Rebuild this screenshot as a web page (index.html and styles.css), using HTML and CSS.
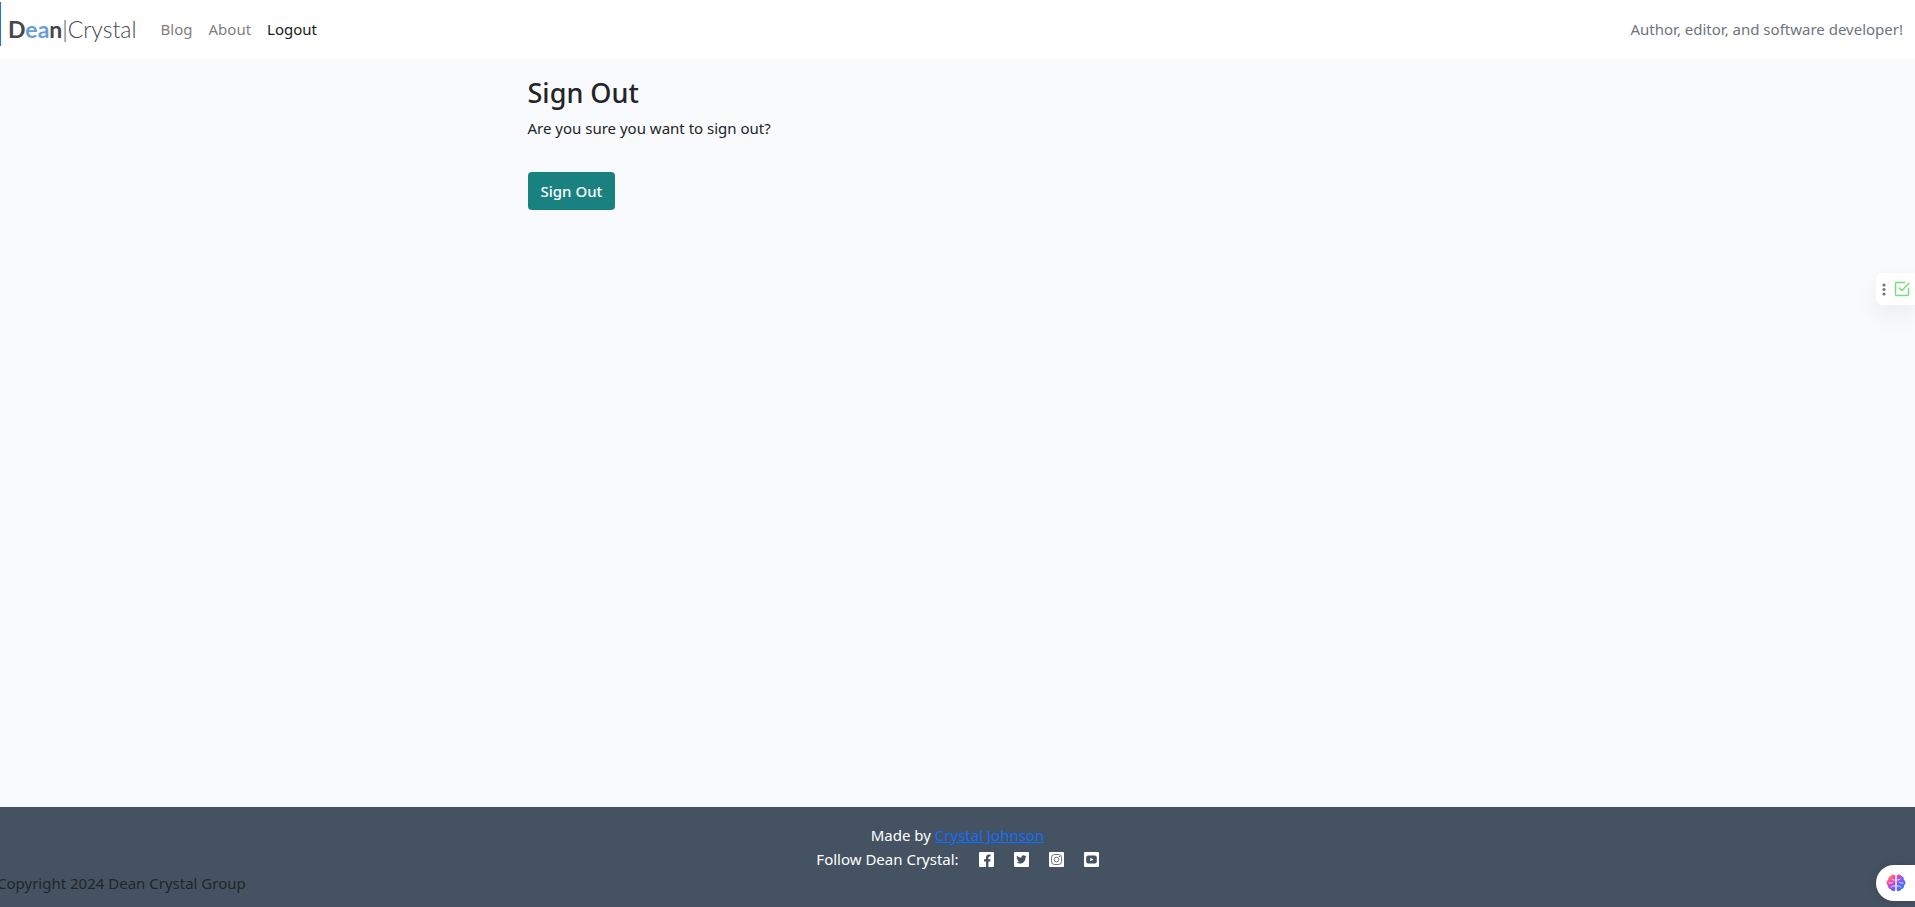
FILE: index.html
```html
<!DOCTYPE html>
<html lang="en">
<head>
<meta charset="utf-8">
<title>Sign Out</title>
<link rel="stylesheet" href="styles.css">
</head>
<body>
<header class="navbar">
  <a class="brand" href="#"><strong>D<span class="accent">ea</span>n</strong>|Crystal</a>
  <nav class="nav">
    <a class="nav-link" href="#">Blog</a>
    <a class="nav-link" href="#">About</a>
    <a class="nav-link active" href="#">Logout</a>
  </nav>
  <span class="tagline">Author, editor, and software developer!</span>
</header>
<main class="content">
  <h2 class="title">Sign Out</h2>
  <p class="prompt">Are you sure you want to sign out?</p>
  <button class="btn" type="submit">Sign Out</button>
</main>
<footer class="footer">
  <p class="line">Made by <a class="author" href="#">Crystal Johnson</a></p>
  <div class="line follow">
    <span>Follow Dean Crystal:</span>
    <a class="social" href="#" aria-label="Facebook"><svg viewBox="0 0 15 15"><rect width="15" height="15" rx="1" fill="#fff"/><path d="M7 15V9.500H5V7.200h2V5.500C7 3.500 8.200 2.400 10 2.400c.8 0 1.600.1 1.600.1v1.900h-1C9.700 4.400 9.400 5 9.400 5.600v1.600h2.200l-.4 2.300H9.400V15z" fill="#455261"/></svg></a>
    <a class="social" href="#" aria-label="Twitter"><svg viewBox="0 0 15 15"><rect width="15" height="15" rx="1" fill="#fff"/><path d="M12.600 4.300c-.4.200-.8.300-1.200.3.500-.3.800-.7.900-1.200-.4.300-.9.400-1.300.5a2.100 2.100 0 0 0-3.600 1.900C5.600 5.700 4 4.900 3 3.600c-.6 1-.3 2.200.7 2.800-.4 0-.7-.1-1-.3 0 1 .7 1.900 1.700 2.100-.3.100-.6.100-.9 0 .3.900 1 1.500 1.900 1.500-.9.700-1.900 1-3.100.9 4.300 2.500 9.300-.3 9.200-5.200.4-.3.800-.7 1.100-1.100z" fill="#455261"/></svg></a>
    <a class="social" href="#" aria-label="Instagram"><svg viewBox="0 0 15 15"><rect width="15" height="15" rx="1" fill="#fff"/><g fill="none" stroke="#455261" stroke-width=".8"><rect x="2.500" y="2.500" width="10" height="10" rx="3"/><circle cx="7.500" cy="7.500" r="2.400"/></g><circle cx="10.500" cy="4.600" r=".7" fill="#455261"/></svg></a>
    <a class="social" href="#" aria-label="YouTube"><svg viewBox="0 0 15 15"><rect width="15" height="15" rx="1" fill="#fff"/><rect x="2.200" y="3.600" width="10.600" height="7.800" rx="2" fill="#455261"/><path d="M6.300 5.700v3.600l3.200-1.800z" fill="#fff"/></svg></a>
  </div>
  <p class="line copyright">Copyright 2024 Dean Crystal Group</p>
</footer>
<span class="focus-bar"></span>
<aside class="check-widget">
  <svg class="dots" viewBox="0 0 4 13"><g fill="#777"><circle cx="2" cy="2" r="1.600"/><circle cx="2" cy="6.500" r="1.600"/><circle cx="2" cy="11" r="1.600"/></g></svg>
  <svg class="check" viewBox="0 0 16 16" fill="none" stroke="#73df7b" stroke-width="1.400"><path d="M11 1.500H2.500a1 1 0 0 0-1 1v11a1 1 0 0 0 1 1h11a1 1 0 0 0 1-1V7M5 6.500l3 3 7.500-7.800"/></svg>
</aside>
<aside class="brain-widget">
  <svg class="brain" viewBox="0 0 20 18">
    <defs><linearGradient id="brain-fill" gradientUnits="userSpaceOnUse" x1="3" y1="1" x2="17" y2="15"><stop offset="0" stop-color="#ff9a2e"/><stop offset=".3" stop-color="#f43fb5"/><stop offset=".6" stop-color="#7b5cf5"/><stop offset="1" stop-color="#2f7bff"/></linearGradient></defs>
    <path d="M9.300 1.500C8 0 5.500 0 4.800 2 2.800 2.300 1.800 4 2.300 5.800 0 7 0 10.500 2 11.600c-.3 2 1 3.500 2.800 3.700 1 2.300 3.500 2.300 4.500.9zM10.700 1.500c1.300-1.500 3.800-1.500 4.500.5 2 .3 3 2 2.500 3.800 2.300 1.200 2.300 4.700.3 5.800.3 2-1 3.500-2.800 3.700-1 2.300-3.500 2.300-4.500.9z" fill="url(#brain-fill)"/>
    <path d="M9 6H7L5.500 4.700M2.500 9h3L7 7.800M9 12H6.500L5 13.500M11 6h2l1.500-1.300M17.500 9h-3L13 7.800M11 12h2.500l1.500 1.500" fill="none" stroke="#fff" stroke-width=".8"/>
  </svg>
</aside>
</body>
</html>
```
FILE: styles.css
```css
* {
  box-sizing: border-box;
}

body {
  display: flex;
  flex-direction: column;
  min-height: 100vh;
  margin: 0;
  background: #f9fafc;
  color: #212529;
  font-family: "Segoe UI", "Noto Sans", "Open Sans", sans-serif;
  font-size: 15px;
  line-height: 24px;
  overflow-x: hidden;
}

.navbar {
  display: flex;
  align-items: center;
  padding: 11px 12px 12px 8px;
  background: #fff;
}

.brand {
  margin-right: 16px;
  color: #45484d;
  font-family: Lato, sans-serif;
  font-size: 23px;
  font-weight: 300;
  line-height: 36px;
  text-decoration: none;
}

.brand strong {
  font-weight: 700;
}

.accent {
  color: #6a9fd4;
}

.nav {
  display: flex;
}

.nav-link {
  padding: 0 8px;
  color: #7f7f7f;
  text-decoration: none;
}

.nav-link.active {
  color: #191919;
}

.tagline {
  margin-left: auto;
  color: #6c757d;
}

.content {
  flex: 1;
  width: 100%;
  max-width: 860px;
  margin: 0 auto;
  padding-top: 17px;
}

.title {
  margin: 0 0 6px;
  font-size: 27px;
  font-weight: 500;
  line-height: 34px;
}

.prompt {
  margin: 0 0 32px;
}

.btn {
  padding: 7px 13px;
  border: 0;
  border-radius: 4px;
  background: #198280;
  color: #fff;
  font: inherit;
  font-weight: 500;
}

.footer {
  padding: 16px 0 12px;
  background: #455261;
}

.line {
  margin: 0;
  color: #fff;
  text-align: center;
}

.author {
  color: #0d6efd;
}

.follow {
  display: flex;
  justify-content: center;
  align-items: center;
  gap: 20px;
}

.social {
  display: flex;
}

.social svg {
  width: 15px;
  height: 15px;
}

.line.copyright {
  margin-left: -3px;
  color: #212529;
  text-align: left;
}

.focus-bar {
  position: absolute;
  top: 2px;
  left: 0;
  width: 1px;
  height: 44px;
  background: #1a73e8;
}

.check-widget {
  position: fixed;
  top: 273px;
  right: 0;
  display: flex;
  align-items: center;
  gap: 8px;
  padding: 8px 5px 8px 6px;
  border-radius: 6px 0 0 6px;
  background: #fff;
  box-shadow: 0 10px 24px rgba(0, 0, 0, 0.06);
}

.dots {
  width: 4px;
  height: 13px;
}

.check {
  width: 16px;
  height: 16px;
}

.brain-widget {
  position: fixed;
  right: 0;
  bottom: 6px;
  display: flex;
  align-items: center;
  padding: 9px 9px 9px 10px;
  border-radius: 18px 0 0 18px;
  background: #fff;
  box-shadow: 0 0 10px rgba(0, 0, 0, 0.15);
}

.brain {
  width: 20px;
  height: 18px;
}
```
